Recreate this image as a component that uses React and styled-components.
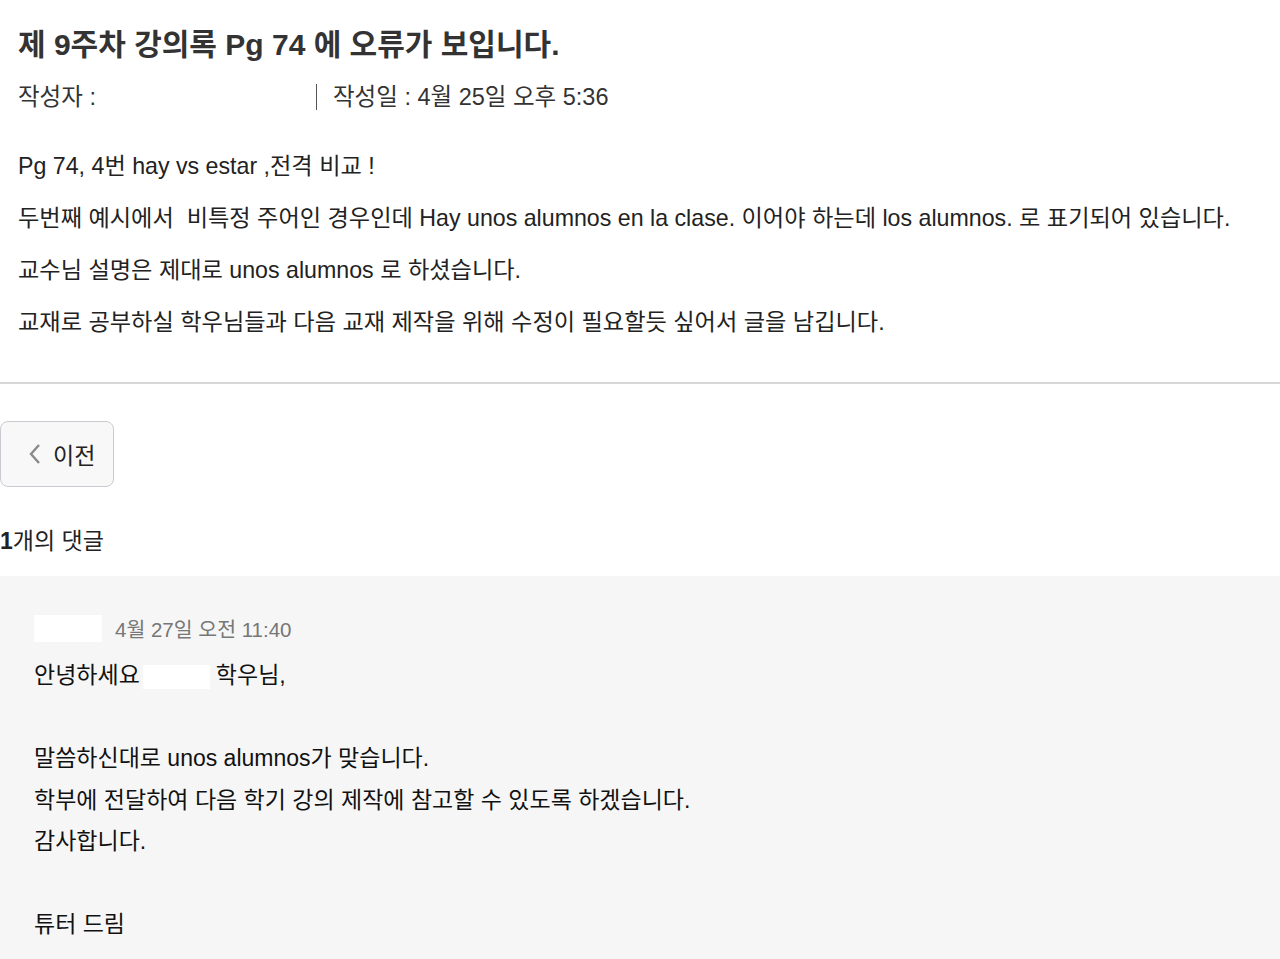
import React from "react";
import styled, { createGlobalStyle } from "styled-components";

const GlobalStyle = createGlobalStyle`
  html, body {
    margin: 0;
    padding: 0;
    background: #fff;
  }
  body {
    font-family: "Liberation Sans", "Noto Sans CJK KR", sans-serif;
    color: #222;
  }
`;

function App() {
  return (
    <Page>
      <GlobalStyle />
      <Post>
        <Title>제 9주차 강의록 Pg 74 에 오류가 보입니다.</Title>
        <Meta>
          <Author>
            작성자 :
            <Redacted width={180} />
          </Author>
          <Separator />
          <span>작성일 : 4월 25일 오후 5:36</span>
        </Meta>
        <Body>
          <p>Pg 74, 4번 hay vs estar ,전격 비교 !</p>
          <p>두번째 예시에서  비특정 주어인 경우인데 Hay unos alumnos en la clase. 이어야 하는데 los alumnos. 로 표기되어 있습니다.</p>
          <p>교수님 설명은 제대로 unos alumnos 로 하셨습니다.</p>
          <p>교재로 공부하실 학우님들과 다음 교재 제작을 위해 수정이 필요할듯 싶어서 글을 남깁니다.</p>
        </Body>
      </Post>
      <Divider />
      <Nav>
        <PrevButton>
          <svg width="14" height="22" viewBox="0 0 14 22">
            <path d="M12 2 L4 11 L12 20" fill="none" stroke="#8a8a8a" strokeWidth="2.4" />
          </svg>
          이전
        </PrevButton>
      </Nav>
      <CommentCount>
        <b>1</b>개의 댓글
      </CommentCount>
      <CommentBox>
        <CommentHead>
          <Redacted width={68} height={27} />
          <CommentDate>4월 27일 오전 11:40</CommentDate>
        </CommentHead>
        <CommentText>
          <Line>
            안녕하세요<NameMask width={67} height={24} />학우님,
          </Line>
          <Line />
          <Line>말씀하신대로 unos alumnos가 맞습니다.</Line>
          <Line>학부에 전달하여 다음 학기 강의 제작에 참고할 수 있도록 하겠습니다.</Line>
          <Line>감사합니다.</Line>
          <Line />
          <Line>튜터 드림</Line>
        </CommentText>
      </CommentBox>
    </Page>
  );
}

export default App;

const Page = styled.div`
  width: 1280px;
  min-height: 959px;
  background: #fff;
`;

const Post = styled.div`
  padding: 25px 18px 0;
`;

const Title = styled.h1`
  margin: 0;
  font-size: 30px;
  font-weight: 700;
  color: #333;
  line-height: 40px;
`;

const Meta = styled.div`
  display: flex;
  align-items: center;
  margin-top: 17px;
  font-size: 23.5px;
  color: #333;
  line-height: 30px;
`;

const Author = styled.span`
  display: flex;
  align-items: center;
  width: 298px;
`;

const Redacted = styled.span`
  display: inline-block;
  width: ${(p) => p.width}px;
  height: ${(p) => p.height || 26}px;
  background: #fff;
  vertical-align: middle;
`;

const NameMask = styled(Redacted)`
  margin: 0 6px 0 3px;
`;

const Separator = styled.span`
  width: 1px;
  height: 26px;
  background: #555;
  margin-right: 16px;
`;

const Body = styled.div`
  margin-top: 28px;
  font-size: 23.2px;
  color: #222;
  white-space: pre-wrap;

  p {
    margin: 0;
    line-height: 52px;
  }
`;

const Divider = styled.hr`
  margin: 34px 0 0;
  border: none;
  border-top: 2px solid #d6d6d6;
`;

const Nav = styled.div`
  padding-top: 37px;
`;

const PrevButton = styled.button`
  display: flex;
  align-items: center;
  gap: 12px;
  width: 114px;
  height: 66px;
  padding: 0 0 0 26px;
  border: 1px solid #c8ccd0;
  border-radius: 8px;
  background: #f8f8f8;
  font-family: inherit;
  font-size: 23px;
  color: #222;
`;

const CommentCount = styled.div`
  margin-top: 39px;
  font-size: 23px;
  color: #222;
  line-height: 30px;

  b {
    font-weight: 700;
  }
`;

const CommentBox = styled.div`
  margin-top: 20px;
  background: #f6f6f6;
  padding: 37px 34px 20px;
`;

const CommentHead = styled.div`
  display: flex;
  align-items: center;
  gap: 13px;
`;

const CommentDate = styled.span`
  font-size: 20.5px;
  color: #777;
`;

const CommentText = styled.div`
  margin-top: 12px;
  font-size: 23px;
  color: #111;
`;

const Line = styled.div`
  line-height: 41.5px;
  min-height: 41.5px;
`;
